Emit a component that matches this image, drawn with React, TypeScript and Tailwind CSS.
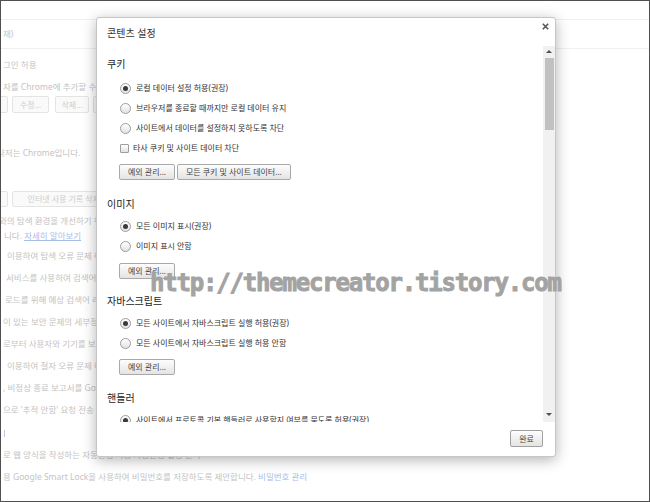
import React from "react";

function Radio({ checked = false }: { checked?: boolean }) {
  return (
    <span className="flex h-[11px] w-[11px] shrink-0 items-center justify-center rounded-full border border-[#9d9d9d] bg-linear-to-b from-white to-[#e2e2e2]">
      {checked && <span className="h-[5px] w-[5px] rounded-full bg-[#3a3a3a]" />}
    </span>
  );
}

function Option({ label, checked = false }: { label: string; checked?: boolean }) {
  return (
    <div className="flex h-[20px] items-center gap-[5px] pl-[13px]">
      <Radio checked={checked} />
      <span className="whitespace-nowrap">{label}</span>
    </div>
  );
}

function Btn({ children }: { children: React.ReactNode }) {
  return (
    <button className="h-[16px] whitespace-nowrap rounded-[2px] border border-[#a9a9a9] bg-linear-to-b from-[#fdfdfd] to-[#e4e4e4] px-[8px] text-[8px] leading-none text-[#444]">
      {children}
    </button>
  );
}

function Heading({ children, className = "" }: { children: React.ReactNode; className?: string }) {
  return <h3 className={`h-[14px] text-[10px] leading-[14px] text-[#222] ${className}`}>{children}</h3>;
}

function FadedBtn({ children, className = "" }: { children?: React.ReactNode; className?: string }) {
  return (
    <div className={`flex shrink-0 items-center justify-center whitespace-nowrap rounded-[2px] border border-[#e4e4e4] bg-[#fafafa] text-[#cdcdcd] ${className}`}>
      {children}
    </div>
  );
}

export default function App() {
  return (
    <div className="relative h-[502px] w-[650px] overflow-hidden border border-[#505050] bg-white font-['Noto_Sans','Noto_Sans_CJK_KR',sans-serif]">
      {/* faded settings page behind the dialog */}
      <div className="flex flex-col whitespace-nowrap text-[8.5px] leading-[12px] text-[#c3c3c3]">
        <div className="mt-[18px] flex h-[30px] items-center border-y border-[#f0f0f0] pl-[2px]">재)</div>
        <div className="mt-[10px] pl-[2px]">그인 허용</div>
        <div className="mt-[10px] pl-[2px]">자를 Chrome에 추가할 수 있습니다.</div>
        <div className="mt-[3px] flex h-[17px] text-[8px]">
          <FadedBtn className="-ml-[33px] w-[40px]" />
          <FadedBtn className="ml-[4px] w-[37px]">수정...</FadedBtn>
          <FadedBtn className="ml-[6px] w-[34px]">삭제...</FadedBtn>
          <FadedBtn className="ml-[4px] w-[60px]">가져오기...</FadedBtn>
        </div>
        <div className="mt-[34px] -ml-[4px]">나저는 Chrome입니다.</div>
        <div className="mt-[32px] flex h-[16px] text-[8px]">
          <FadedBtn className="-ml-[32px] w-[39px]" />
          <FadedBtn className="ml-[4px] w-[110px]">인터넷 사용 기록 삭제...</FadedBtn>
        </div>
        <div className="mt-[8px] -ml-[2px]">와의 탐색 환경을 개선하기 위해 웹 서비스를 사용할 수 있습니다.</div>
        <div className="mt-[3px] pl-[3px]">
          니다. <span className="text-[#a9bce6] underline">자세히 알아보기</span>
        </div>
        <div className="mt-[8px] pl-[6px]">이용하여 탐색 오류 문제 해결 지원</div>
        <div className="mt-[10px] pl-[5px]">서비스를 사용하여 검색어 및 주소창 입력 완성</div>
        <div className="mt-[10px] pl-[4px]">로드를 위해 예상 검색어 리소스 미리 가져오기</div>
        <div className="mt-[10px] pl-[2px]">이 있는 보안 문제의 세부정보를 자동으로 보고</div>
        <div className="mt-[10px] pl-[2px]">로부터 사용자와 기기를 보호</div>
        <div className="mt-[10px] pl-[6px]">이용하여 철자 오류 문제 해결 지원</div>
        <div className="mt-[10px] pl-[2px]">, 비정상 종료 보고서를 Google에 자동으로 전송</div>
        <div className="mt-[10px] pl-[2px]">으로 '추적 안함' 요청 전송</div>
        <div className="mt-[11px] flex h-[12px] items-center pl-[3px]">
          <div className="h-[7px] w-[1px] bg-[#c6bfe8]" />
        </div>
        <div className="mt-[10px] pl-[2px]">로 웹 양식을 작성하는 자동완성 사용 자동완성 설정 관리</div>
        <div className="mt-[10px] pl-[2px]">
          용 Google Smart Lock을 사용하여 비밀번호를 저장하도록 제안합니다.{" "}
          <span className="text-[#a9bce6]">비밀번호 관리</span>
        </div>
      </div>

      {/* content settings dialog */}
      <div className="absolute left-[95px] top-[16px] flex h-[440px] w-[460px] flex-col rounded-[3px] border border-[#c6c6c6] bg-white text-[#333] shadow-[0_3px_14px_rgba(0,0,0,0.3)]">
        <div className="relative h-[28px] shrink-0 pl-[10px] pt-[9px] text-[10px] leading-[12px] text-[#333]">
          콘텐츠 설정
          <svg className="absolute right-[6px] top-[5px]" width="7" height="7" viewBox="0 0 7 7">
            <path d="M0.8 0.8 L6.2 6.2 M6.2 0.8 L0.8 6.2" stroke="#555" strokeWidth="1.6" />
          </svg>
        </div>

        <div className="flex h-[376px] shrink-0">
          <div className="flex-1 overflow-hidden pl-[10px] pt-[11px] text-[8px]">
            <Heading>쿠키</Heading>
            <div className="mt-[7px]">
              <Option label="로컬 데이터 설정 허용(권장)" checked />
              <Option label="브라우저를 종료할 때까지만 로컬 데이터 유지" />
              <Option label="사이트에서 데이터를 설정하지 못하도록 차단" />
              <div className="flex h-[20px] items-center gap-[4px] pl-[13px]">
                <span className="h-[9px] w-[9px] shrink-0 rounded-[1px] border border-[#9d9d9d] bg-linear-to-b from-white to-[#e2e2e2]" />
                <span className="whitespace-nowrap">타사 쿠키 및 사이트 데이터 차단</span>
              </div>
            </div>
            <div className="mt-[6px] flex gap-[2px] pl-[12px]">
              <Btn>예외 관리...</Btn>
              <Btn>모든 쿠키 및 사이트 데이터...</Btn>
            </div>

            <Heading className="mt-[17px]">이미지</Heading>
            <div className="mt-[5px]">
              <Option label="모든 이미지 표시(권장)" checked />
              <Option label="이미지 표시 안함" />
            </div>
            <div className="mt-[7px] flex pl-[12px]">
              <Btn>예외 관리...</Btn>
            </div>

            <Heading className="mt-[15px]">자바스크립트</Heading>
            <div className="mt-[5px]">
              <Option label="모든 사이트에서 자바스크립트 실행 허용(권장)" checked />
              <Option label="모든 사이트에서 자바스크립트 실행 허용 안함" />
            </div>
            <div className="mt-[6px] flex pl-[12px]">
              <Btn>예외 관리...</Btn>
            </div>

            <Heading className="mt-[16px]">핸들러</Heading>
            <div className="mt-[5px]">
              <Option label="사이트에서 프로토콜 기본 핸들러로 사용할지 여부를 묻도록 허용(권장)" checked />
              <Option label="사이트에서 프로토콜을 처리하도록 허용 안함" />
            </div>
          </div>

          {/* scrollbar */}
          <div className="flex w-[12px] shrink-0 flex-col items-center bg-[#f1f1f1]">
            <div className="flex h-[11px] items-center justify-center">
              <div className="h-0 w-0 border-x-[3px] border-b-[3px] border-x-transparent border-b-[#505050]" />
            </div>
            <div className="mt-[1px] h-[72px] w-[9px] bg-[#c1c1c1]" />
            <div className="flex-1" />
            <div className="mb-[2px] flex h-[11px] items-center justify-center">
              <div className="h-0 w-0 border-x-[3px] border-t-[3px] border-x-transparent border-t-[#505050]" />
            </div>
          </div>
        </div>

        <div className="flex flex-1 justify-end pr-[12px] pt-[8px]">
          <button className="h-[17px] w-[33px] rounded-[2px] border border-[#a0a0a0] bg-linear-to-b from-[#fdfdfd] to-[#e4e4e4] text-[8px] leading-none text-[#444]">
            완료
          </button>
        </div>
      </div>

      {/* watermark */}
      <div className="pointer-events-none absolute left-[149px] top-[270px] whitespace-nowrap font-['DejaVu_Sans_Mono',monospace] text-[24px] font-bold leading-none tracking-[-1.2px] text-[#a3a3a3] [-webkit-text-stroke:0.9px_#a3a3a3]">
        http://themecreator.tistory.com
      </div>
    </div>
  );
}
